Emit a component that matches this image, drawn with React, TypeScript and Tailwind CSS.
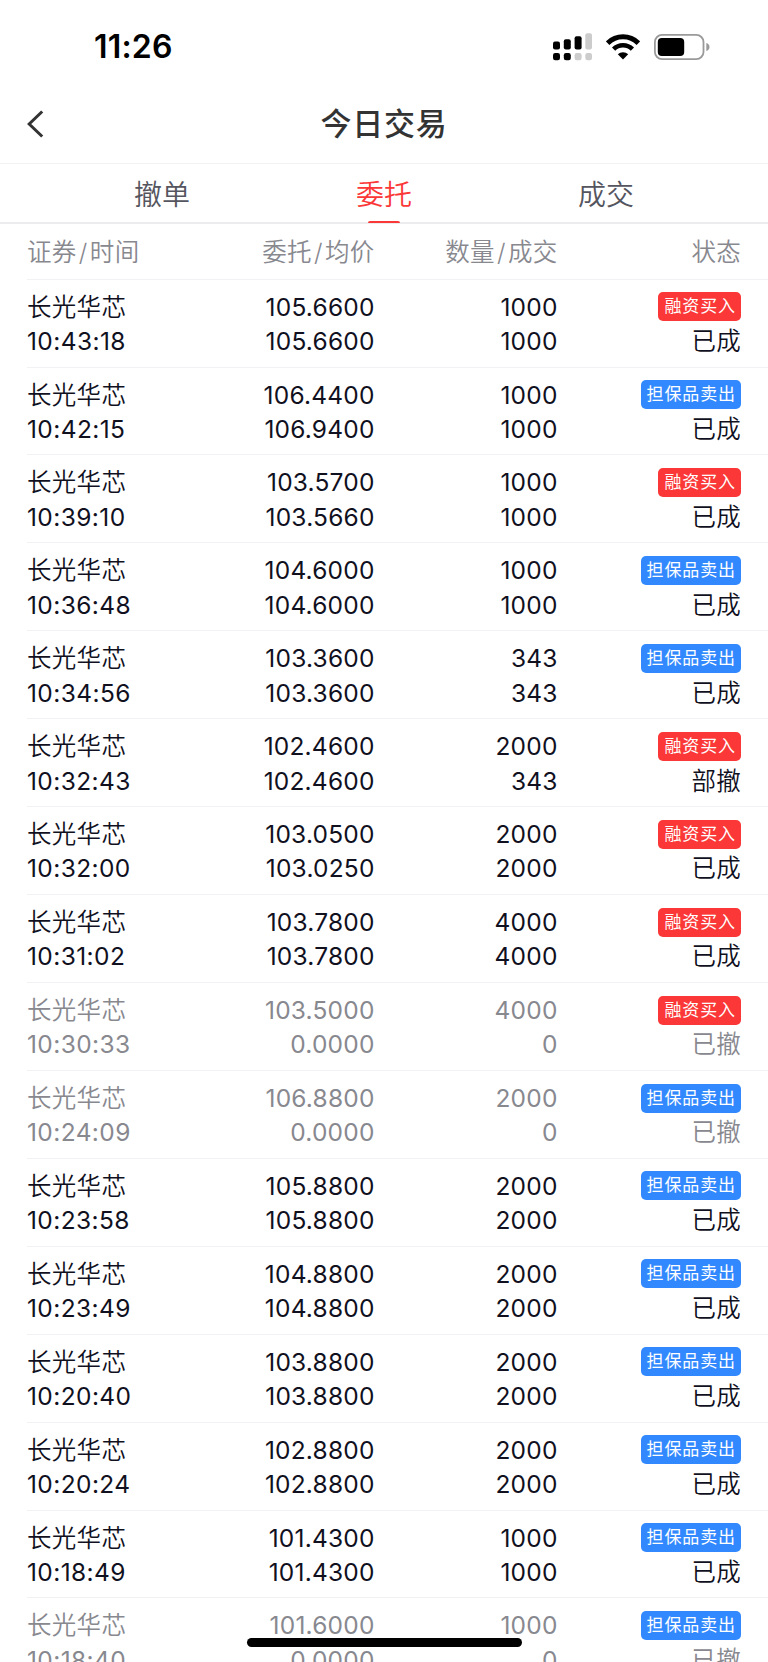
type Order = {
  time: string;
  price: string;
  avg: string;
  qty: string;
  filled: string;
  side: 'buy' | 'sell';
  status: string;
};

const orders: Order[] = [
  { time: '10:43:18', price: '105.6600', avg: '105.6600', qty: '1000', filled: '1000', side: 'buy', status: '已成' },
  { time: '10:42:15', price: '106.4400', avg: '106.9400', qty: '1000', filled: '1000', side: 'sell', status: '已成' },
  { time: '10:39:10', price: '103.5700', avg: '103.5660', qty: '1000', filled: '1000', side: 'buy', status: '已成' },
  { time: '10:36:48', price: '104.6000', avg: '104.6000', qty: '1000', filled: '1000', side: 'sell', status: '已成' },
  { time: '10:34:56', price: '103.3600', avg: '103.3600', qty: '343', filled: '343', side: 'sell', status: '已成' },
  { time: '10:32:43', price: '102.4600', avg: '102.4600', qty: '2000', filled: '343', side: 'buy', status: '部撤' },
  { time: '10:32:00', price: '103.0500', avg: '103.0250', qty: '2000', filled: '2000', side: 'buy', status: '已成' },
  { time: '10:31:02', price: '103.7800', avg: '103.7800', qty: '4000', filled: '4000', side: 'buy', status: '已成' },
  { time: '10:30:33', price: '103.5000', avg: '0.0000', qty: '4000', filled: '0', side: 'buy', status: '已撤' },
  { time: '10:24:09', price: '106.8800', avg: '0.0000', qty: '2000', filled: '0', side: 'sell', status: '已撤' },
  { time: '10:23:58', price: '105.8800', avg: '105.8800', qty: '2000', filled: '2000', side: 'sell', status: '已成' },
  { time: '10:23:49', price: '104.8800', avg: '104.8800', qty: '2000', filled: '2000', side: 'sell', status: '已成' },
  { time: '10:20:40', price: '103.8800', avg: '103.8800', qty: '2000', filled: '2000', side: 'sell', status: '已成' },
  { time: '10:20:24', price: '102.8800', avg: '102.8800', qty: '2000', filled: '2000', side: 'sell', status: '已成' },
  { time: '10:18:49', price: '101.4300', avg: '101.4300', qty: '1000', filled: '1000', side: 'sell', status: '已成' },
  { time: '10:18:40', price: '101.6000', avg: '0.0000', qty: '1000', filled: '0', side: 'sell', status: '已撤' },
];

const tabs = ['撤单', '委托', '成交'];

function StatusBar() {
  return (
    <div className="flex h-[86px] shrink-0 items-center justify-between pt-[7px] pr-[58px] pl-[94px]">
      <span className="text-[32px] leading-[40px] font-semibold tracking-[0.2px] text-black">11:26</span>
      <div className="flex items-center">
        {/* dual sim signal */}
        <svg width="39" height="28" viewBox="0 0 39 28" className="mr-[14px]">
          <rect x="0" y="8.5" width="7" height="8" rx="2" fill="#000" />
          <rect x="10.8" y="6.3" width="7" height="10.2" rx="2" fill="#000" />
          <rect x="21.6" y="3.3" width="7" height="13.2" rx="2" fill="#000" />
          <rect x="32.3" y="0.3" width="6.7" height="16.2" rx="2" fill="#ccc" />
          <rect x="0" y="20" width="7" height="7.3" rx="2.2" fill="#000" />
          <rect x="10.8" y="20" width="7" height="7.3" rx="2.2" fill="#000" />
          <rect x="21.6" y="20" width="7" height="7.3" rx="2.2" fill="#ccc" />
          <rect x="32.3" y="20" width="6.7" height="7.3" rx="2.2" fill="#ccc" />
        </svg>
        <svg width="34" height="26" viewBox="0 0 34 26" className="mr-[14px]">
          <path d="M1.6 9.2A21.8 21.8 0 0 1 32.4 9.2" fill="none" stroke="#000" strokeWidth="5" />
          <path d="M7.6 15.2A13.3 13.3 0 0 1 26.4 15.2" fill="none" stroke="#000" strokeWidth="4.6" />
          <path d="M17 25.5L11.8 20.3A7.4 7.4 0 0 1 22.2 20.3Z" fill="#000" />
        </svg>
        <svg width="56" height="26" viewBox="0 0 56 26">
          <rect x="0.9" y="0.9" width="48.6" height="24.2" rx="7.2" fill="none" stroke="#9a9a9a" strokeWidth="1.8" />
          <rect x="3.8" y="4" width="26.4" height="18" rx="4" fill="#000" />
          <path d="M52.3 9C54.2 9.6 55.5 11 55.5 13S54.2 16.4 52.3 17Z" fill="#9a9a9a" />
        </svg>
      </div>
    </div>
  );
}

function ColumnLabel({ first, second }: { first: string; second: string }) {
  return (
    <>
      {first}
      <span className="mx-[2.2px]">/</span>
      {second}
    </>
  );
}

function OrderRow({ order }: { order: Order }) {
  const cancelled = order.status === '已撤';

  return (
    <div
      className={`ml-[27px] flex h-[87.93px] shrink-0 border-b border-[#f2f2f4] pt-[10px] pr-[27px] text-[24.5px] leading-[34.3px] ${
        cancelled ? 'text-[#88888f]' : 'text-[#10101e]'
      }`}
    >
      <div className="w-[160px]">
        <div className="font-[350] tracking-[0.3px]">长光华芯</div>
        <div className="tracking-[0.4px]">{order.time}</div>
      </div>
      <div className="w-[187.6px] text-right tracking-[0.2px]">
        <div>{order.price}</div>
        <div>{order.avg}</div>
      </div>
      <div className="w-[183px] text-right tracking-[0.2px]">
        <div>{order.qty}</div>
        <div>{order.filled}</div>
      </div>
      <div className="flex flex-1 flex-col items-end">
        <div className="flex h-[34.3px] items-center">
          <span
            className={`flex h-[29px] items-center rounded-[5px] pr-[5px] pl-[6px] text-[17px] leading-[29px] tracking-[0.9px] text-white ${
              order.side === 'buy' ? 'bg-[#fb3737]' : 'bg-[#3289ff]'
            }`}
          >
            {order.side === 'buy' ? '融资买入' : '担保品卖出'}
          </span>
        </div>
        <div className="font-[350] tracking-[0.3px]">{order.status}</div>
      </div>
    </div>
  );
}

export default function App() {
  const active = '委托';

  return (
    <div className="relative flex h-[1662px] w-[768px] flex-col overflow-hidden bg-white font-[Inter,'Noto_Sans_CJK_SC',sans-serif]">
      <StatusBar />

      {/* title */}
      <div className="flex h-[78px] shrink-0 items-center border-b border-[#f2f2f4] px-[27px] pb-[1px]">
        <svg width="17" height="28" viewBox="0 0 17 28" fill="none" stroke="#333" strokeWidth="3">
          <path d="M15.2 1.5L2.2 14L15.2 26.5" />
        </svg>
        <h1 className="flex-1 pr-[17px] text-center text-[31px] leading-[40px] font-medium tracking-[0.8px] text-[#333]">
          今日交易
        </h1>
      </div>

      {/* tabs */}
      <div className="flex h-[60px] shrink-0 border-b-2 border-[#ececee] px-[51px]">
        {tabs.map((tab) => (
          <div
            key={tab}
            className={`relative flex flex-1 items-center justify-center pt-[4px] text-[28px] font-[350] ${
              tab === active ? 'text-[#fb3737]' : 'text-[#55555f]'
            }`}
          >
            {tab}
            {tab === active && <span className="absolute -bottom-px h-[2px] w-8 rounded-t bg-[#fb3737]" />}
          </div>
        ))}
      </div>

      {/* column names */}
      <div className="ml-[27px] flex h-[55.6px] shrink-0 items-center border-b border-[#f2f2f4] pt-[2px] pr-[27px] text-[24.5px] font-[350] tracking-[0.3px] text-[#88888f]">
        <div className="w-[160px]">
          <ColumnLabel first="证券" second="时间" />
        </div>
        <div className="w-[187.6px] text-right">
          <ColumnLabel first="委托" second="均价" />
        </div>
        <div className="w-[183px] text-right">
          <ColumnLabel first="数量" second="成交" />
        </div>
        <div className="flex-1 text-right">状态</div>
      </div>

      {orders.map((order) => (
        <OrderRow key={order.time} order={order} />
      ))}

      {/* home indicator */}
      <div className="absolute bottom-[15px] left-[247px] h-[9px] w-[275px] rounded-full bg-black" />
    </div>
  );
}
